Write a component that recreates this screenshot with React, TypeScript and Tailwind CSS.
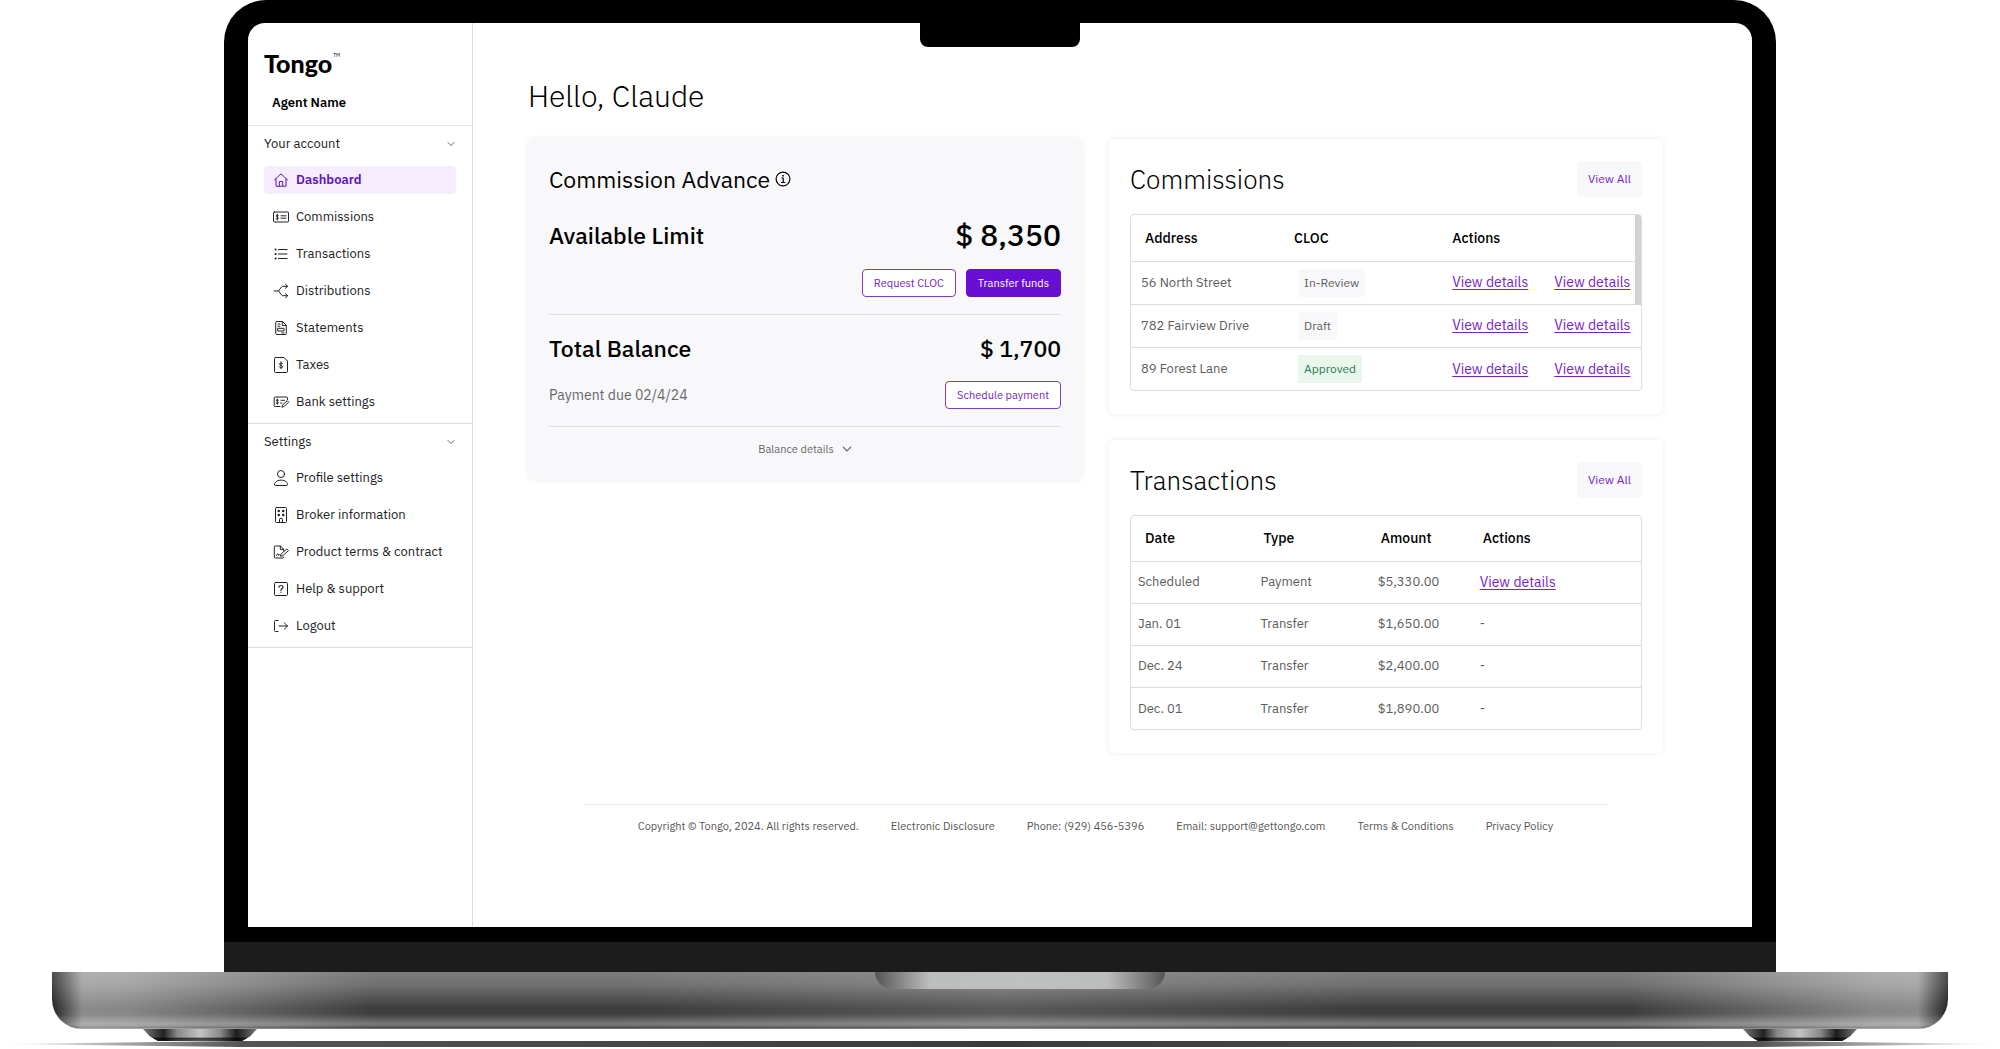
import { useState } from 'react';
import type { ReactNode } from 'react';
import clsx from 'clsx';

interface NavItem {
  label: string;
  icon: ReactNode;
}

interface Commission {
  address: string;
  status: 'In-Review' | 'Draft' | 'Approved';
}

interface Transaction {
  date: string;
  type: string;
  amount: string;
  hasDetails: boolean;
}

const Icon = ({ children }: { children: ReactNode }) => (
  <svg
    viewBox="0 0 16 16"
    className="h-4 w-4 shrink-0 overflow-visible"
    fill="none"
    stroke="currentColor"
    strokeLinecap="round"
    strokeLinejoin="round"
    aria-hidden="true"
  >
    {children}
  </svg>
);

const Chevron = ({ className }: { className?: string }) => (
  <svg viewBox="0 0 8 8" className={className} fill="none" stroke="currentColor" strokeLinecap="round" strokeLinejoin="round" aria-hidden="true">
    <path d="M1 2.5 4 5.5 7 2.5" />
  </svg>
);

const accountItems: NavItem[] = [
  {
    label: 'Dashboard',
    icon: <Icon><path d="M1.5 8 8 1.8 14.500 8M3 6.800V14.200H13V6.800M6.300 14V9.500H9.700V14" /></Icon>,
  },
  {
    label: 'Commissions',
    icon: (
      <Icon>
        <rect x="0.5" y="3" width="15" height="10" rx="1" />
        <path d="M5.300 6.300C4.800 5.700 3.200 5.800 3.200 6.900S5.400 7.900 5.400 9.100 3.600 10.300 3 9.600M4.300 5.200V11M8 6.800H13M8 9.200H13" />
      </Icon>
    ),
  },
  {
    label: 'Transactions',
    icon: <Icon><path d="M5.500 3.500H14M5.500 8H14M5.500 12.500H14" /><path strokeWidth="2" d="M2.500 3.500H2.600M2.500 8H2.600M2.500 12.500H2.600" /></Icon>,
  },
  {
    label: 'Distributions',
    icon: <Icon><path d="M1 8H5.500L8.500 4Q9.200 3.300 10 3.300H14.500M5.500 8 8.500 12Q9.200 12.700 10 12.700H14.500M12.500 1.300 14.600 3.300 12.500 5.300M12.500 10.700 14.600 12.700 12.500 14.700" /></Icon>,
  },
  {
    label: 'Statements',
    icon: <Icon><path d="M3.500 1.500H9.500L13.300 5.300V13.500Q13.300 14.500 12.300 14.500H3.700Q2.700 14.500 2.700 13.500V2.500Q2.700 1.500 3.500 1.500ZM9.300 1.700V5.500H13M5 4H7M5 6.200H7M5 8.300H11V11H5ZM8.800 12.900H11" /></Icon>,
  },
  {
    label: 'Taxes',
    icon: (
      <Icon>
        <path d="M2.500 0.500H11L14.500 4V14.500Q14.500 15.500 13.500 15.500H2.500Q1.500 15.500 1.500 14.500V1.500Q1.500 0.500 2.500 0.500Z" />
        <path d="M9.600 6.600C9 5.600 6.500 5.700 6.500 7.100S9.700 8.200 9.700 9.700 6.900 11.100 6.300 9.900M8 4.800V11.700" />
      </Icon>
    ),
  },
  {
    label: 'Bank settings',
    icon: (
      <Icon>
        <path d="M7 12.500H2.300Q1.200 12.500 1.200 11.500V4Q1.200 3 2.300 3H13.500Q14.500 3 14.500 4V5.500" />
        <path d="M5.300 6C4.800 5.400 3.400 5.600 3.400 6.500S5.400 7.500 5.400 8.600 3.800 9.700 3.200 9.100M4.300 5V10.300M8 6.300H11.500M7.500 9H9M9 12.900 9.500 11 14.200 6.700 15.700 8.200 11 12.400Z" />
      </Icon>
    ),
  },
];

const settingsItems: NavItem[] = [
  {
    label: 'Profile settings',
    icon: <Icon><circle cx="8" cy="4" r="3.500" /><path d="M1.500 14.500C1.500 8.600 14.500 8.600 14.500 14.500Q14.500 15.500 13.500 15.500H2.500Q1.500 15.500 1.500 14.500Z" /></Icon>,
  },
  {
    label: 'Broker information',
    icon: (
      <Icon>
        <rect x="2.500" y="0.500" width="11" height="15" rx="1" />
        <path d="M6.500 15.300V12.300Q6.500 11.300 8 11.300T9.500 12.300V15.300" />
        <path strokeWidth="2.400" d="M5.700 4H5.800M10.200 4H10.300M5.700 8H5.800M10.200 8H10.300" />
      </Icon>
    ),
  },
  {
    label: 'Product terms & contract',
    icon: (
      <Icon>
        <path d="M10.700 13V13.500Q10.700 14 10 14H2.300Q1.300 14 1.300 13V3Q1.300 2 2.300 2H7.500L10.700 5.200V7M7.300 2.200V5.400H10.500" />
        <path d="M3.500 11.500C4.500 9 5.500 9.500 5.300 11.200 6.500 10.200 7 10.700 7.500 11.600M7.500 11.800 8.200 9.800 13.800 5 15.500 6.600 10 11.500Z" />
      </Icon>
    ),
  },
  {
    label: 'Help & support',
    icon: (
      <Icon>
        <rect x="1.500" y="1.500" width="13" height="13" rx="1" />
        <path strokeWidth="1.200" d="M6 6.200C6 3.900 10 3.900 10 6.200 10 7.600 8 7.600 8 9.300M8 11.200V11.300" />
      </Icon>
    ),
  },
  {
    label: 'Logout',
    icon: <Icon><path d="M5 13.500H2.500Q1.500 13.500 1.500 12.500V3.500Q1.500 2.500 2.500 2.500H5M6 8H14.500M11.300 4.800 14.500 8 11.300 11.200" /></Icon>,
  },
];

const commissions: Commission[] = [
  { address: '56 North Street', status: 'In-Review' },
  { address: '782 Fairview Drive', status: 'Draft' },
  { address: '89 Forest Lane', status: 'Approved' },
];

const transactions: Transaction[] = [
  { date: 'Scheduled', type: 'Payment', amount: '$5,330.00', hasDetails: true },
  { date: 'Jan. 01', type: 'Transfer', amount: '$1,650.00', hasDetails: false },
  { date: 'Dec. 24', type: 'Transfer', amount: '$2,400.00', hasDetails: false },
  { date: 'Dec. 01', type: 'Transfer', amount: '$1,890.00', hasDetails: false },
];

const statusStyle: Record<Commission['status'], string> = {
  'In-Review': 'bg-[#f8f8fb] text-[#5c5c5c]',
  Draft: 'bg-[#f8f8fb] text-[#5c5c5c]',
  Approved: 'bg-[#e8f6ec] text-[#287a58]',
};

const footerLinks = [
  'Electronic Disclosure',
  'Phone: (929) 456-5396',
  'Email: support@gettongo.com',
  'Terms & Conditions',
  'Privacy Policy',
];

function NavSection({ title, items, active }: { title: string; items: NavItem[]; active?: string }) {
  const [open, setOpen] = useState(true);

  return (
    <section className="flex flex-col gap-[9px] border-b border-[#dcdcdc] px-4 pt-1 pb-[7px]">
      <button
        onClick={() => setOpen((v) => !v)}
        aria-expanded={open}
        className="flex h-[27px] items-center justify-between pr-px text-[13px] text-[#222]"
      >
        {title}
        <Chevron className="h-2 w-2 text-[#666]" />
      </button>
      {open &&
        items.map((item) => (
          <a
            key={item.label}
            href="#"
            className={clsx(
              'flex h-7 items-center gap-[7px] rounded pl-[9px] text-[13px]',
              item.label === active ? 'bg-[#f5edfe] font-semibold text-[#5d12bd]' : 'text-[#222]'
            )}
          >
            {item.icon}
            {item.label}
          </a>
        ))}
    </section>
  );
}

function Sidebar() {
  return (
    <nav className="w-[225px] shrink-0 border-r border-[#dcdcdc]">
      <div className="border-b border-[#e4e4e4] px-4 pt-[22px] pb-3">
        <div className="flex items-start gap-px text-black">
          <span className="font-['Lato','Open_Sans',sans-serif] text-[25px] leading-9 font-black">Tongo</span>
          <span className="pt-[6px] text-[5px] leading-2">TM</span>
        </div>
        <p className="pt-3 pl-2 text-[13px] leading-5 font-semibold text-black">Agent Name</p>
      </div>
      <NavSection title="Your account" items={accountItems} active="Dashboard" />
      <NavSection title="Settings" items={settingsItems} />
    </nav>
  );
}

function AdvanceCard() {
  return (
    <section className="rounded-md bg-[#f8f8fb] px-[21px] pt-6 pb-[21px] shadow-[0_0_6px_rgba(0,0,0,0.08)]">
      <h2 className="flex items-center gap-[5px] text-[23px] leading-8 text-black">
        Commission Advance
        <svg viewBox="0 0 16 16" className="h-4 w-4" fill="none" stroke="currentColor" aria-hidden="true">
          <circle cx="8" cy="8" r="6.900" strokeWidth="1.200" />
          <path strokeWidth="1.200" d="M6.500 7H8.200V11.500M6 11.500H10.300" />
          <circle cx="8" cy="4.700" r="0.900" fill="currentColor" stroke="none" />
        </svg>
      </h2>
      <div className="mt-5 flex h-10 items-center justify-between font-medium text-black">
        <h3 className="text-[23px]">Available Limit</h3>
        <p className="text-3xl">$ 8,350</p>
      </div>
      <div className="mt-[14px] flex justify-end gap-[10px] text-[11px]">
        <button className="h-7 rounded-[4px] border border-[#7d3cc9] bg-white px-[11px] text-[#7424cb]">Request CLOC</button>
        <button className="h-7 rounded-[4px] border border-[#690fd3] bg-[#690fd3] px-[11px] text-white">Transfer funds</button>
      </div>
      <hr className="mt-[17px] border-[#dedee2]" />
      <div className="mt-[17px] flex h-8 items-center justify-between text-[23px] font-medium text-black">
        <h3>Total Balance</h3>
        <p>$ 1,700</p>
      </div>
      <div className="mt-[17px] flex h-7 items-center justify-between">
        <p className="text-sm text-[#666]">Payment due 02/4/24</p>
        <button className="h-7 rounded-[4px] border border-[#7d3cc9] bg-white px-[11px] text-[11px] text-[#7424cb]">Schedule payment</button>
      </div>
      <hr className="mt-[17px] border-[#dedee2]" />
      <button className="mx-auto mt-3 flex h-5 items-center gap-2 text-[11px] text-[#666]">
        Balance details
        <Chevron className="h-[10px] w-[10px]" />
      </button>
    </section>
  );
}

function TableCard({ title, children }: { title: string; children: ReactNode }) {
  return (
    <section className="rounded-md bg-white px-[21px] pt-[22px] pb-[23px] shadow-[0_0_6px_rgba(0,0,0,0.08)]">
      <div className="mb-[17px] flex items-center justify-between">
        <h2 className="text-[26px] leading-9 font-light text-black">{title}</h2>
        <button className="h-9 rounded-[4px] bg-[#f8f8fb] px-[11px] text-xs text-[#7424cb]">View All</button>
      </div>
      <div className="relative overflow-hidden rounded-[4px] border border-[#dcdcdc]">{children}</div>
    </section>
  );
}

const DetailsLink = () => (
  <a href="#" className="text-sm text-[#7424cb] underline underline-offset-2">View details</a>
);

function CommissionsCard() {
  return (
    <TableCard title="Commissions">
      <table className="w-full table-fixed text-left text-[13px] text-[#5c5c5c]">
        <colgroup>
          <col className="w-[31%]" />
          <col className="w-[31%]" />
          <col className="w-[21%]" />
          <col className="w-[17%]" />
        </colgroup>
        <thead>
          <tr className="h-[46px] text-sm text-black">
            <th className="pl-[14px] font-medium">Address</th>
            <th className="pl-[5px] font-medium">CLOC</th>
            <th colSpan={2} className="pl-[5px] font-medium">Actions</th>
          </tr>
        </thead>
        <tbody>
          {commissions.map((c) => (
            <tr key={c.address} className="h-[43px] border-t border-[#dcdcdc]">
              <td className="pl-[10px]">{c.address}</td>
              <td className="pl-[9px]">
                <span className={clsx('inline-flex h-7 items-center rounded-[2px] px-[6px] align-middle text-xs', statusStyle[c.status])}>
                  {c.status}
                </span>
              </td>
              <td className="pl-[5px]"><DetailsLink /></td>
              <td><DetailsLink /></td>
            </tr>
          ))}
        </tbody>
      </table>
      {/* Scrollbar thumb */}
      <div className="absolute top-0 right-0 h-[90px] w-[6px] bg-[#d2d2d2]" />
    </TableCard>
  );
}

function TransactionsCard() {
  return (
    <TableCard title="Transactions">
      <table className="w-full table-fixed text-left text-[13px] text-[#5c5c5c]">
        <colgroup>
          <col className="w-[24%]" />
          <col className="w-[23%]" />
          <col className="w-[20%]" />
          <col className="w-[33%]" />
        </colgroup>
        <thead>
          <tr className="h-[45px] text-sm text-black">
            {['Date', 'Type', 'Amount', 'Actions'].map((h) => (
              <th key={h} className="pl-[10px] font-medium first:pl-[14px]">{h}</th>
            ))}
          </tr>
        </thead>
        <tbody>
          {transactions.map((t) => (
            <tr key={t.date} className="h-[42px] border-t border-[#dcdcdc]">
              <td className="pl-[7px]">{t.date}</td>
              <td className="pl-[7px]">{t.type}</td>
              <td className="pl-[7px]">{t.amount}</td>
              <td className="pl-[7px]">{t.hasDetails ? <DetailsLink /> : '-'}</td>
            </tr>
          ))}
        </tbody>
      </table>
    </TableCard>
  );
}

function Footer() {
  return (
    <footer className="mx-14 mt-[51px] flex flex-wrap justify-center gap-x-8 gap-y-2 border-t border-[#e8e8e8] pt-[11px] text-[11px] leading-5 text-[#555]">
      <span>Copyright © Tongo, 2024. All rights reserved.</span>
      {footerLinks.map((label) => (
        <a key={label} href="#">{label}</a>
      ))}
    </footer>
  );
}

function LaptopBase() {
  return (
    <div className="flex flex-col items-center">
      <div className="flex h-[57px] w-[94.8%] justify-center overflow-hidden rounded-b-[30px] bg-[linear-gradient(90deg,rgba(0,0,0,0.4)_0%,rgba(255,255,255,0.4)_1.6%,rgba(255,255,255,0.38)_4%,rgba(255,255,255,0)_17%,rgba(255,255,255,0)_30%,rgba(255,255,255,0.15)_50%,rgba(255,255,255,0)_70%,rgba(255,255,255,0)_83%,rgba(255,255,255,0.38)_96%,rgba(255,255,255,0.4)_98.4%,rgba(0,0,0,0.4)_100%),linear-gradient(180deg,#7c7c7c_0%,#707070_22%,#3c3c3c_64%,#3f3f3f_74%,#787878_91%,#6c6c6c_95%,#444_97%,#888_100%)] pl-[2%]">
        <div className="h-[17px] w-[290px] rounded-b-[17px] bg-[linear-gradient(90deg,#555_0%,#777_6%,#bcbebd_19%,#bfc1c0_50%,#bcbebd_80%,#777_94%,#555_100%)]" />
      </div>
      <div className="flex w-[85.7%] justify-between">
        <Foot />
        <Foot />
      </div>
      <div className="h-[6px] w-full bg-[linear-gradient(90deg,transparent_0%,#555_12%,#3a3a3a_50%,#555_88%,transparent_100%)] [clip-path:polygon(0_50%,12%_0,88%_0,100%_50%,88%_100%,12%_100%)]" />
    </div>
  );
}

const Foot = () => (
  <div className="h-3 w-[114px] bg-[linear-gradient(180deg,transparent_68%,rgba(0,0,0,0.7)_76%,rgba(0,0,0,0.55)_100%),linear-gradient(90deg,#777_0%,#222_18%,#888_30%,#c4c4c4_50%,#888_68%,#1c1c1c_82%,#777_100%)] [clip-path:polygon(0_0,100%_0,94%_60%,87%_100%,13%_100%,6%_60%)]" />
);

export default function App() {
  return (
    <div className="w-full bg-white font-['IBM_Plex_Sans','Roboto','Noto_Sans',sans-serif]">
      {/* Lid */}
      <div className="mx-auto w-[77.6%] overflow-hidden rounded-t-[42px] bg-black">
        <div className="relative px-6 pt-[23px] pb-[15px]">
          <div className="absolute top-0 left-1/2 h-[47px] w-[160px] -translate-x-1/2 rounded-b-lg bg-black" />
          <div className="flex overflow-hidden rounded-t-[17px] bg-white">
            <Sidebar />
            <main className="min-w-0 flex-1 pt-[53px] pr-[89px] pb-[91px] pl-[55px]">
              <h1 className="text-3xl leading-10 font-light text-black">Hello, Claude</h1>
              <div className="mt-[23px] grid grid-cols-2 items-start gap-[27px]">
                <AdvanceCard />
                <div className="flex flex-col gap-[26px]">
                  <CommissionsCard />
                  <TransactionsCard />
                </div>
              </div>
              <Footer />
            </main>
          </div>
        </div>
        <div className="h-[30px] bg-[#1c1c1c]" />
      </div>
      <LaptopBase />
    </div>
  );
}
